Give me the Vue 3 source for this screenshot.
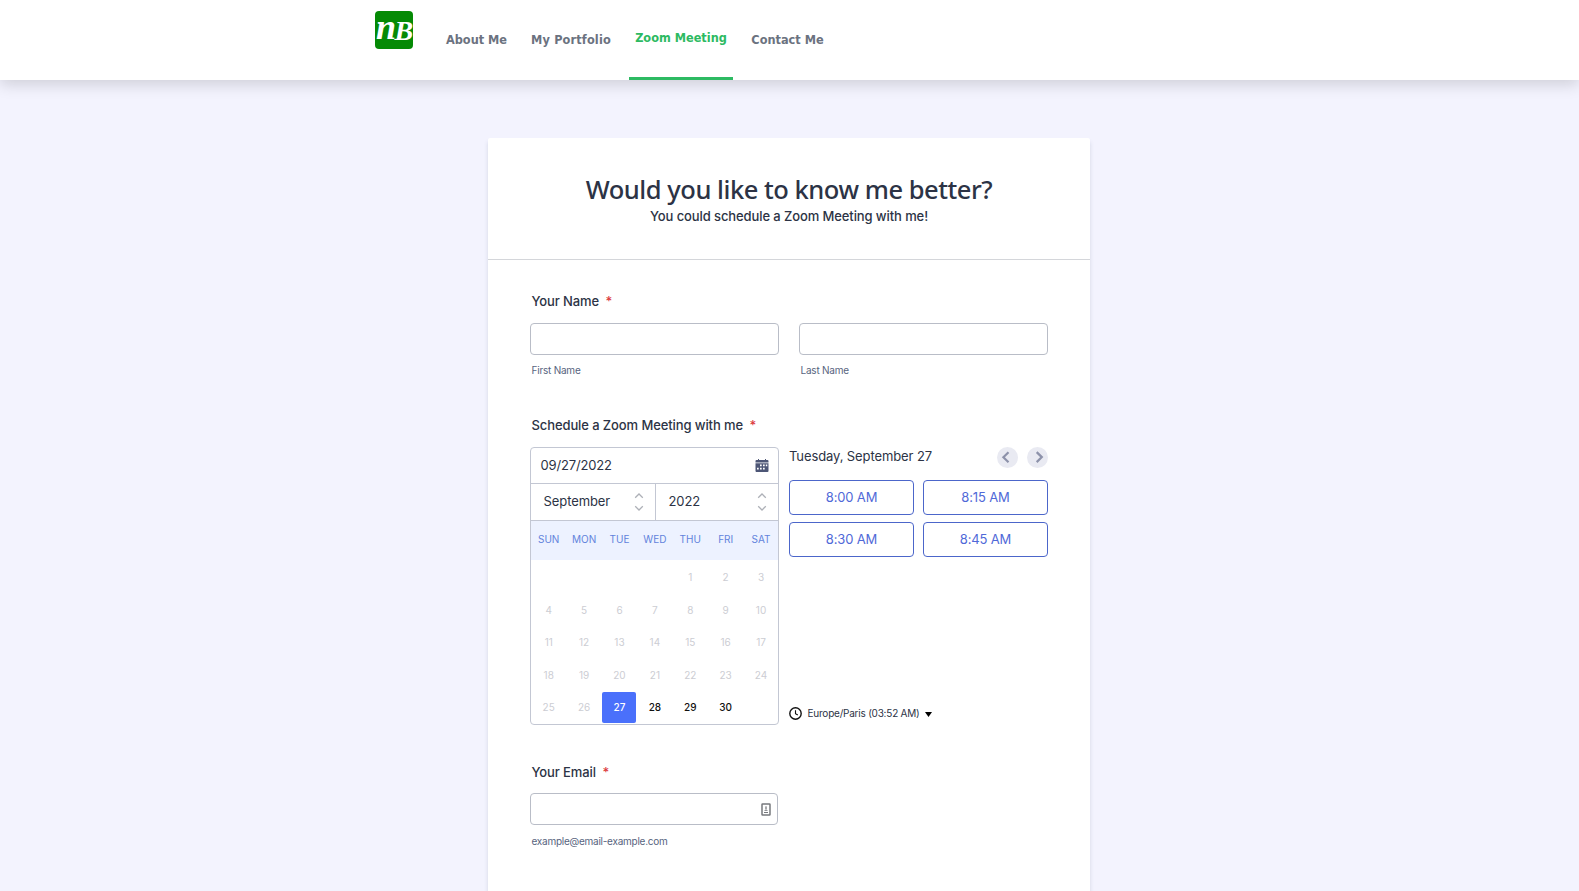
<script setup>
const links = ['About Me', 'My Portfolio', 'Zoom Meeting', 'Contact Me']
const weekdays = ['SUN', 'MON', 'TUE', 'WED', 'THU', 'FRI', 'SAT']
const slots = ['8:00 AM', '8:15 AM', '8:30 AM', '8:45 AM']
const cells = [...Array(4).fill(''), ...Array.from({ length: 30 }, (_, i) => i + 1)]
const selected = 27
</script>

<template>
  <div class="page">
    <nav class="nav">
      <svg class="logo" viewBox="0 0 38 38" width="38" height="38">
        <rect width="38" height="38" rx="4" fill="#058a05" />
        <text class="n" x="1" y="28">n</text>
        <text class="b" x="19.500" y="28.500">B</text>
      </svg>
      <a v-for="(l, i) in links" :key="l" class="link" :class="[{ active: i === 2 }, 'link' + i]">{{ l }}</a>
    </nav>

    <main class="card">
      <header class="head">
        <h1>Would you like to know me better?</h1>
        <p>You could schedule a Zoom Meeting with me!</p>
      </header>

      <section class="field">
        <label class="label">Your Name<b>*</b></label>
        <div class="names">
          <div><div class="input"></div><span class="sub">First Name</span></div>
          <div><div class="input"></div><span class="sub">Last Name</span></div>
        </div>
      </section>

      <section class="field schedule">
        <label class="label">Schedule a Zoom Meeting with me<b>*</b></label>
        <div class="planner">
          <div class="calendar">
            <div class="date">
              <span>09/27/2022</span>
              <svg width="14" height="14" viewBox="0 0 14 14">
                <path fill="#4d5676" d="M1.500 1H3V0h1v1h6V0h1v1h1.500Q13.500 1 13.500 2v1.500H.5V2Q.5 1 1.500 1M.5 4.300h13V12q0 1-1 1h-11q-1 0-1-1z" />
                <path fill="#fff" d="M5 5.500h1.700v1.700H5zM8 5.500h1.700v1.700H8zM10.800 5.500h1.500v1.700h-1.500zM2 8.700h1.700v1.700H2zM5 8.700h1.700v1.700H5zM8 8.700h1.700v1.700H8z" />
              </svg>
            </div>
            <div class="selects">
              <div v-for="s in ['September', '2022']" :key="s" class="select">
                <span>{{ s }}</span>
                <svg width="10" height="20" viewBox="0 0 10 20" fill="none" stroke="#adb0b7" stroke-width="1.300">
                  <path d="M1.200 5.700 5 2l3.800 3.700M1.200 14.300 5 18l3.800-3.700" />
                </svg>
              </div>
            </div>
            <div class="week"><span v-for="d in weekdays" :key="d">{{ d }}</span></div>
            <div class="days">
              <span v-for="(c, i) in cells" :key="i" :class="{ picked: c === selected, open: c > selected }">{{ c }}</span>
            </div>
          </div>

          <div class="times">
            <div class="times-head">
              <span>Tuesday, September 27</span>
              <svg width="21" height="21" viewBox="0 0 21 21">
                <circle cx="10.500" cy="10.500" r="10.500" fill="#e9eaf2" />
                <path d="M11.500 5.300 6.400 10.300l5.100 5" fill="none" stroke="#8d92aa" stroke-width="2.200" />
              </svg>
              <svg class="next" width="21" height="21" viewBox="0 0 21 21">
                <circle cx="10.500" cy="10.500" r="10.500" fill="#e9eaf2" />
                <path d="m9.700 5.100 5.100 5-5.100 5" fill="none" stroke="#8d92aa" stroke-width="2.200" />
              </svg>
            </div>
            <div class="slots"><button v-for="s in slots" :key="s">{{ s }}</button></div>
            <div class="zone">
              <svg width="13" height="13" viewBox="0 0 13 13" fill="none" stroke="#111">
                <circle cx="6.500" cy="6.500" r="5.700" stroke-width="1.400" />
                <path d="M6.500 3.200v3.600l2.300 1.300" stroke-width="1.100" />
              </svg>
              <span>Europe/Paris (03:52 AM)</span>
              <svg class="caret" width="7" height="5" viewBox="0 0 7 5"><path d="M0 0h7L3.500 5z" /></svg>
            </div>
          </div>
        </div>
      </section>

      <section class="field email">
        <label class="label">Your Email<b>*</b></label>
        <div class="input">
          <svg width="10" height="13" viewBox="0 0 10 13" fill="none" stroke="#77797d">
            <rect x="1" y="1" width="8" height="11" rx=".5" stroke-width="1.500" />
            <path d="M3 9.500h4" stroke-width="1" />
            <path d="M3.500 7.500h3M5 3v4M4 5h2" stroke-width=".8" />
          </svg>
        </div>
        <span class="sub">example@email-example.com</span>
      </section>
    </main>
  </div>
</template>

<style>
body { background: #f3f3fe; overflow: hidden; }
</style>

<style scoped>
* { box-sizing: border-box; }
.page { height: 891px; overflow: hidden; background: #f3f3fe; font-family: Inter, sans-serif; color: #2c3345; }
.nav { height: 80px; padding-left: 375px; background: #fff; display: flex; align-items: flex-start; box-shadow: 0 4px 15px rgba(0, 0, 0, .16); }
.logo { margin: 11px 27px 0 0; display: block; overflow: visible; }
.logo text { fill: #fff; font-family: "Liberation Serif", serif; font-style: italic; font-weight: 700; }
.logo .n { font-size: 36px; }
.logo .b { font-size: 28px; }
.link { height: 80px; white-space: nowrap; text-align: center; font: 700 12.600px/79px "DejaVu Sans Condensed", "DejaVu Sans", sans-serif; font-stretch: condensed; color: #6b7280; }
.link0 { width: 73px; margin-right: 12px; }
.link1 { width: 92px; margin-right: 12px; letter-spacing: .15px; }
.link2 { width: 104px; margin-right: 12px; }
.link3 { width: 85px; }
.active { color: #2dba62; line-height: 75px; border-bottom: 3px solid #2dba62; }
.card { width: 602px; height: 800px; margin: 58px 0 0 488px; background: #fff; border-radius: 2px 2px 0 0; box-shadow: 0 4px 4px rgba(87, 100, 126, .2); }
.head { height: 122px; padding-top: 33px; text-align: center; border-bottom: 1px solid #d4d6da; }
h1 { margin: 0; font: 500 25.500px/36px "Noto Sans", sans-serif; letter-spacing: -.47px; white-space: nowrap; }
.head p { margin: 1px 0 0; font-size: 13px; font-weight: 500; line-height: 17px; letter-spacing: -.1px; }
.field { padding: 0 42px; }
.label { display: block; height: 63px; padding: 33px 0 0 1.500px; font-size: 13px; line-height: 17px; font-weight: 500; letter-spacing: -.1px; }
.label b { margin-left: 6.500px; color: #dc3b40; font-weight: 500; }
.names { display: flex; gap: 20px; }
.names > div { width: 249px; }
.input { height: 32px; border: 1px solid #b9bdc7; border-radius: 4px; }
.sub { display: block; margin: 8px 0 1px 1.500px; font-size: 10px; line-height: 14px; letter-spacing: -.22px; color: #57647e; }
.schedule { margin-top: 6px; }
.planner { display: flex; gap: 10px; }
.calendar { width: 249px; height: 278px; border: 1px solid #c3c7d3; border-radius: 4px; overflow: hidden; }
.date { height: 36px; padding: 0 9px 2px 9.500px; display: flex; align-items: center; justify-content: space-between; font-size: 13px; letter-spacing: -.15px; border-bottom: 1px solid #c3c7d3; }
.date svg { margin-top: 2px; }
.selects { display: flex; height: 37px; border-bottom: 1px solid #c3c7d3; }
.select { flex: 1; padding: 0 11px 0 12.500px; display: flex; align-items: center; justify-content: space-between; font-size: 13px; letter-spacing: -.08px; }
.select span { padding-bottom: 2px; }
.select:first-child { flex: 0 0 125px; border-right: 1px solid #c3c7d3; }
.week { height: 39px; padding-bottom: 3px; display: grid; grid-template-columns: repeat(7, 35.400px); align-items: center; text-align: center; background: #edf2ff; font-size: 10px; color: #6283dc; }
.days { display: grid; grid-template-columns: repeat(7, 35.400px); grid-template-rows: 35px repeat(4, 32.300px); }
.days span { display: flex; align-items: center; justify-content: center; margin: 0 .7px; padding-bottom: 2px; font-size: 10px; color: #cccdd3; }
.days .picked { height: 31px; margin-top: .5px; padding-bottom: 1px; color: #fff; background: #4a70fb; border-radius: 2px; font-weight: 500; }
.days .open { color: #111; font-weight: 500; }
.times { width: 259px; height: 278px; display: flex; flex-direction: column; }
.times-head { height: 33px; display: flex; align-items: flex-start; font-size: 13px; line-height: 19px; letter-spacing: -.1px; }
.times-head span { flex: 1; }
.next { margin-left: 9px; }
.slots { display: grid; grid-template-columns: 125px 125px; gap: 7px 9px; }
button { height: 35px; padding: 0 0 2px; background: #fff; border: 1px solid #4c66ca; border-radius: 4px; color: #5069d8; font: 400 13px Inter, sans-serif; letter-spacing: -.15px; }
.zone { margin: auto 0 4px; display: flex; align-items: center; font-size: 10px; line-height: 15px; letter-spacing: -.22px; }
.zone span { margin: 0 5px 0 5.500px; }
.caret { margin-top: 2px; }
.email { padding-top: 6px; }
.email .label { height: 62px; padding-top: 33px; }
.email .input { width: 248px; display: flex; align-items: center; justify-content: flex-end; padding-right: 6px; }
.email .sub { margin-top: 9px; letter-spacing: -.25px; }
</style>
